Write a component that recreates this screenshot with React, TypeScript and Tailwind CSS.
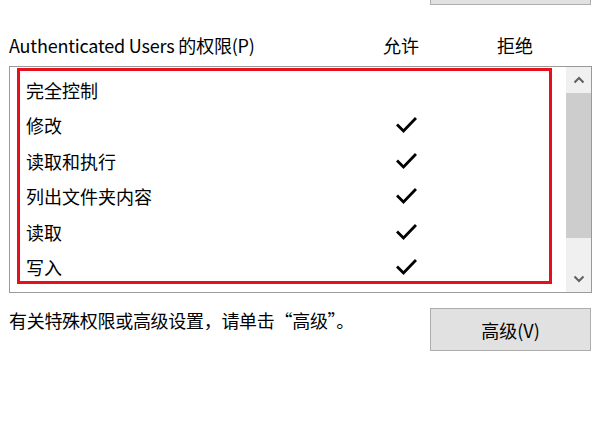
import React from "react";

const rows = [
  { name: "完全控制", allow: false },
  { name: "修改", allow: true },
  { name: "读取和执行", allow: true },
  { name: "列出文件夹内容", allow: true },
  { name: "读取", allow: true },
  { name: "写入", allow: true },
];

function Check() {
  return (
    <svg width="21" height="18" viewBox="0 0 21 18" className="block">
      <path d="M2 9.5 L7.5 15 L19 3" fill="none" stroke="#000" strokeWidth="2.8" strokeLinecap="square" />
    </svg>
  );
}

function Chevron({ up }: { up?: boolean }) {
  return (
    <svg width="12" height="8" viewBox="0 0 12 8" className="block">
      <path d={up ? "M1.5 6.5 L6 2 L10.5 6.5" : "M1.5 1.5 L6 6 L10.5 1.5"} fill="none" stroke="#606060" strokeWidth="2" />
    </svg>
  );
}

export default function App() {
  return (
    <div
      className="w-[609px] h-[425px] bg-white text-black overflow-hidden text-[18px] leading-[24px]"
      style={{ fontFamily: '"Microsoft YaHei", "Noto Sans CJK SC", "Noto Sans", sans-serif' }}
    >
      {/* cropped button above */}
      <div className="ml-[430px] w-[161px] h-[5px] border-x border-b border-[#adadad] bg-[#e1e1e1]" />

      {/* header row */}
      <div className="mt-[28px] flex items-center pl-[9px]">
        <span className="w-[374px] tracking-[-0.2px]">Authenticated Users 的权限(P)</span>
        <span className="w-[114px]">允许</span>
        <span>拒绝</span>
      </div>

      {/* permission list */}
      <div className="relative mt-[9px] ml-[9px] w-[583px] h-[227px] border border-[#9a9a9a] flex">
        <div className="flex-1 pt-[5px] pl-[16px]">
          {rows.map((r) => (
            <div key={r.name} className="h-[35.5px] grid grid-cols-[370px_auto] items-center">
              <span>{r.name}</span>
              {r.allow ? <Check /> : <span />}
            </div>
          ))}
        </div>
        <div className="w-[25px] bg-[#f0f0f0] flex flex-col">
          <div className="h-[26px] flex items-center justify-center">
            <Chevron up />
          </div>
          <div className="h-[145px] bg-[#cdcdcd]" />
          <div className="flex-1" />
          <div className="h-[26px] flex items-center justify-center">
            <Chevron />
          </div>
        </div>
        {/* red annotation */}
        <div className="absolute left-[7px] top-[1px] w-[535px] h-[216px] border-[3px] border-[#e5101c] pointer-events-none" />
      </div>

      {/* footer */}
      <div className="mt-[15px] flex items-start pl-[9px]">
        <span className="w-[421px] tracking-[-0.3px]">有关特殊权限或高级设置，请单击“高级”。</span>
        <button className="w-[161px] h-[43px] border border-[#adadad] bg-[#e1e1e1] flex items-center justify-center">
          高级(V)
        </button>
      </div>
    </div>
  );
}
